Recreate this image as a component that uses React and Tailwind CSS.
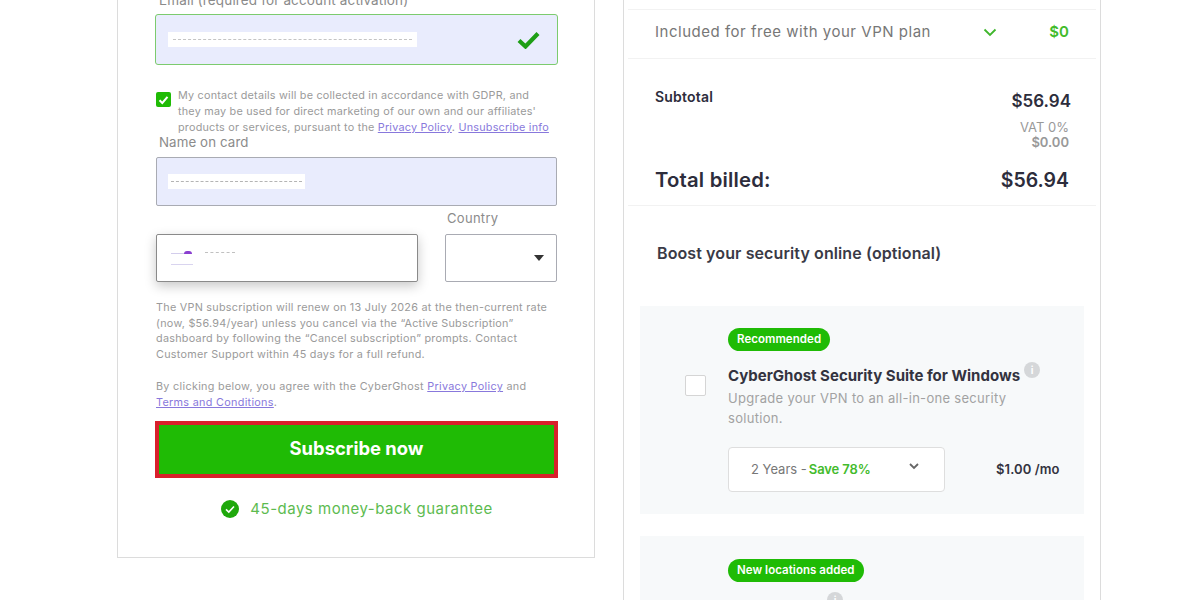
import React from "react";

const Info = ({ className }) => (
  <span className={"flex h-4 w-4 items-center justify-center rounded-full bg-[#d5d7d9] text-[10px] font-bold leading-none text-white " + className}>i</span>
);

const Badge = ({ children }) => (
  <span className="flex h-[23px] w-fit items-center rounded-full bg-[#1fbb05] px-[9px] text-[11.5px] font-semibold tracking-[0.05px] text-white">{children}</span>
);

const Link = ({ children }) => <a className="text-[#8878dc] underline">{children}</a>;

function Left() {
  return (
    <section className="-mt-[10px] flex h-[568px] w-[478px] shrink-0 flex-col border border-t-0 border-[#dcdcdc] pl-[37px] pr-[36px] text-[#9a9a9a]">
      <label className="ml-[4px] h-[24px] text-[13.5px] leading-[20px] tracking-[0.15px] text-[#8b8b8b]">Email (required for account activation)</label>
      <div className="flex h-[51px] w-[403px] items-center justify-between rounded-[3px] border border-[#7ccb6e] bg-[#e9ecfd] pl-[12px] pr-[17px]">
        <span className="flex h-[15px] w-[249px] items-center bg-white px-[5px]">
          <span className="w-full border-t border-dashed border-[#c4c4c4]" />
        </span>
        <svg width="23" height="18" viewBox="0 0 23 18"><path d="M2 9.5 L8.5 15.5 L21 2.5" fill="none" stroke="#1e9e16" strokeWidth="4.2" /></svg>
      </div>
      <div className="mt-[23px] flex">
        <span className="ml-[1px] mt-[4px] flex h-[15px] w-[15px] shrink-0 items-center justify-center rounded-[2px] bg-[#1fbb05]">
          <svg width="11" height="10" viewBox="0 0 11 10"><path d="M1.5 5.2 L4.3 8 L9.5 1.8" fill="none" stroke="#fff" strokeWidth="2" /></svg>
        </span>
        <p className="ml-[7px] w-[374px] text-[10.8px] leading-[16px] tracking-[0.22px]">
          My contact details will be collected in accordance with GDPR, and<br />they may be used for direct marketing of our own and our affiliates'<br />products or services, pursuant to the <Link>Privacy Policy</Link>. <Link>Unsubscribe info</Link>
        </p>
      </div>
      <label className="ml-[4px] mt-[-4px] h-[25px] text-[13.3px] leading-[20px] tracking-[0.1px] text-[#8b8b8b]">Name on card</label>
      <div className="ml-[1px] flex h-[49px] w-[401px] items-center rounded-[2px] border border-[#a9abb3] bg-[#e9ecfd] pl-[11px]">
        <span className="flex h-[15px] w-[137px] items-center bg-white px-[3px]">
          <span className="w-full border-t border-dashed border-[#b4b4b4]" />
        </span>
      </div>
      <label className="ml-[292px] mt-[4px] h-[24px] text-[13px] leading-[16px] tracking-[0.3px] text-[#8b8b8b]">Country</label>
      <div className="ml-[1px] flex w-[401px] justify-between">
        <div className="flex h-[48px] w-[262px] flex-col justify-center gap-[10px] rounded-[2px] border border-[#8a8a8a] bg-white pl-[14px] shadow-[0_4px_12px_rgba(0,0,0,0.22)]">
          <span className="flex items-center gap-[12px]">
            <span className="flex h-[3px] w-[22px] items-end bg-transparent">
              <span className="h-px w-[13px] bg-[#d3cdec]" />
              <span className="h-[3px] w-[8px] rounded-t-full bg-[#8a3fd0]" />
            </span>
            <span className="w-[30px] border-t border-dashed border-[#c0c0c0]" />
          </span>
          <span className="h-px w-[22px] bg-[#d9d4ef]" />
        </div>
        <div className="flex h-[48px] w-[112px] items-center justify-end rounded-[2px] border border-[#a9abb3] bg-white pr-[12px]">
          <span className="h-0 w-0 border-x-[5px] border-t-[6px] border-x-transparent border-t-[#333]" />
        </div>
      </div>
      <p className="ml-[1px] mt-[18px] w-[403px] text-[10.8px] leading-[15.6px] tracking-[0.27px]">
        The VPN subscription will renew on 13 July 2026 at the then-current rate<br />(now, $56.94/year) unless you cancel via the “Active Subscription”<br />dashboard by following the “Cancel subscription” prompts. Contact<br />Customer Support within 45 days for a full refund.
      </p>
      <p className="ml-[1px] mt-[17px] w-[403px] text-[10.8px] leading-[16px] tracking-[0.31px]">
        By clicking below, you agree with the CyberGhost <Link>Privacy Policy</Link> and<br /><Link>Terms and Conditions</Link>.
      </p>
      <button className="mt-[10px] flex h-[57px] w-[403px] shrink-0 items-center justify-center border-[4px] border-[#d9202c] bg-[#1fbb05] pb-[2px] text-[18.4px] font-bold text-white">Subscribe now</button>
      <div className="mt-[21px] flex w-[403px] items-center justify-center gap-[11px] pl-[1px]">
        <svg width="18" height="18" viewBox="0 0 18 18"><circle cx="9" cy="9" r="9" fill="#1fa80c" /><path d="M5 9.3 L7.8 12 L13 6.5" fill="none" stroke="#fff" strokeWidth="1.6" /></svg>
        <span className="text-[15px] leading-[20px] tracking-[0.5px] text-[#5dbb50]">45-days money-back guarantee</span>
      </div>
    </section>
  );
}

function Right() {
  return (
    <section className="flex h-[600px] w-[478px] shrink-0 flex-col overflow-hidden border-x border-[#dcdcdc]">
      <div className="mx-[4px] mt-[9px] flex h-[50px] shrink-0 items-center border-y border-[#f2f2f2] pb-[3px] pl-[27px] pr-[27px] text-[15px]">
        <span className="tracking-[0.52px] text-[#777]">Included for free with your VPN plan</span>
        <svg className="ml-[52px]" width="14" height="9" viewBox="0 0 14 9"><path d="M1.5 1.5 L7 7 L12.5 1.5" fill="none" stroke="#3fb62c" strokeWidth="1.8" /></svg>
        <span className="ml-auto font-semibold text-[#43bb2c]">$0</span>
      </div>
      <div className="mx-[4px] flex h-[147px] shrink-0 flex-col border-b border-[#f2f2f2] pl-[27px] pr-[27px]">
        <div className="mt-[28px] flex items-start justify-between">
          <span className="text-[14px] font-semibold leading-[20px] tracking-[0.2px] text-[#2d2d3c]">Subtotal</span>
          <span className="mt-[2px] mr-[-2px] text-[17px] font-semibold leading-[24px] text-[#2d2d3c]">$56.94</span>
        </div>
        <span className="mt-[7px] self-end text-[13px] leading-[15px] text-[#999]">VAT 0%</span>
        <span className="self-end text-[13px] font-semibold leading-[15px] text-[#999]">$0.00</span>
        <div className="mt-[15px] flex items-center justify-between text-[#2d2d3c]">
          <span className="text-[20.3px] font-semibold leading-[30px] tracking-[0.2px]">Total billed:</span>
          <span className="text-[19.5px] font-semibold leading-[30px]">$56.94</span>
        </div>
      </div>
      <h3 className="ml-[33px] mt-[36px] h-[64px] shrink-0 text-[16px] font-semibold leading-[22px] tracking-[0.1px] text-[#3a3a46]">Boost your security online (optional)</h3>
      <div className="ml-[16px] flex h-[208px] w-[444px] shrink-0 bg-[#f7f9fa] pt-[22px]">
        <span className="ml-[45px] mt-[47px] h-[21px] w-[21px] shrink-0 rounded-[2px] border border-[#d5d5d5] bg-white" />
        <div className="ml-[22px] flex min-w-0 flex-1 flex-col">
          <Badge>Recommended</Badge>
          <div className="mt-[14px] flex items-start">
            <span className="text-[15px] font-bold leading-[22px] tracking-[0.01px] text-[#333340]">CyberGhost Security Suite for Windows</span>
            <Info className="ml-[4px] mt-[-3px]" />
          </div>
          <p className="mt-[1px] w-[300px] text-[13px] leading-[20px] tracking-[0.3px] text-[#a2a2a2]">Upgrade your VPN to an all-in-one security solution.</p>
          <div className="mt-[19px] flex items-center">
            <div className="flex h-[45px] w-[217px] items-center rounded-[4px] border border-[#dedede] bg-white pl-[22px] text-[13px]">
              <span className="text-[#777]">2 Years - </span><span className="ml-[2px] font-semibold tracking-[-0.1px] text-[#43bb2c]">Save 78%</span>
              <svg className="mb-[7px] ml-[38px]" width="10" height="7" viewBox="0 0 10 7"><path d="M1 1 L5 5 L9 1" fill="none" stroke="#666" strokeWidth="1.8" /></svg>
            </div>
            <span className="ml-[51px] text-[13px] font-semibold tracking-[0.1px] text-[#333340]">$1.00 /mo</span>
          </div>
        </div>
      </div>
      <div className="ml-[16px] mt-[22px] flex h-[100px] w-[444px] shrink-0 bg-[#f7f9fa] pl-[88px] pt-[23px]">
        <div className="flex flex-col">
          <Badge>New locations added</Badge>
          <Info className="ml-[99px] mt-[10px]" />
        </div>
      </div>
    </section>
  );
}

export default function App() {
  return (
    <main className="flex h-[600px] w-[1200px] gap-[28px] overflow-hidden bg-white pl-[117px] font-['Inter',sans-serif]">
      <Left />
      <Right />
    </main>
  );
}
